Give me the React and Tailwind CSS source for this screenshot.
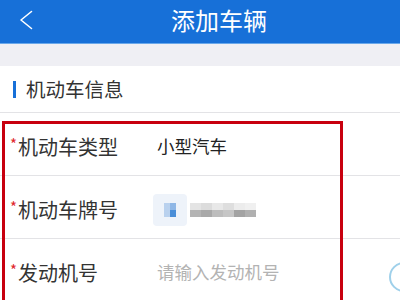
const font = { fontFamily: '"Noto Sans CJK SC", "Noto Sans", sans-serif' };

function Row({ label, children }) {
    return (
        <div className="flex items-center h-[63px] pt-[5px] border-b border-[#e3e3e6]">
            <div className="w-[157px] flex items-center pl-[10px] text-[20px] leading-none text-[#333]">
                <span className="text-[#e0262b] text-[15px] relative -top-[3px] mr-[1px]">*</span>
                {label}
            </div>
            <div className="flex-1 flex items-center">{children}</div>
        </div>
    );
}

export default function App() {
    return (
        <div className="relative w-[400px] h-[300px] overflow-hidden bg-white" style={font}>
            {/* Header */}
            <div className="h-[44px] bg-[#1770d8] border-b border-[#6aa8ea] flex items-center pl-[19px]">
                <svg width="14" height="20" viewBox="0 0 14 20" fill="none" className="-mt-[4px]">
                    <polyline points="12.5,1.5 2,10 12.5,18.5" stroke="white" strokeWidth="1.6" strokeLinecap="round" strokeLinejoin="round" />
                </svg>
                <div className="flex-1 text-center text-white text-[24px] leading-none pl-[5px] -mt-[3px]">添加车辆</div>
            </div>

            <div className="h-[22px] bg-[#efeff4]" />

            {/* Section title */}
            <div className="h-[47px] flex items-center border-b border-[#e3e3e6] pl-[13px]">
                <div className="w-[3px] h-[17px] bg-[#1770d8] mr-[10px]" />
                <span className="text-[19.5px] text-[#333]">机动车信息</span>
            </div>

            <Row label="机动车类型">
                <span className="text-[17.5px] text-[#222]">小型汽车</span>
            </Row>

            <Row label="机动车牌号">
                <div className="flex items-center -ml-[4px]">
                    <div className="w-[34px] h-[32px] rounded-[4px] bg-[#eef3fa] flex items-center justify-center">
                        <div className="grid grid-cols-2">
                            <div className="w-[6px] h-[7px] bg-[#b9d1ee]" />
                            <div className="w-[6px] h-[7px] bg-[#8fb7e6]" />
                            <div className="w-[6px] h-[7px] bg-[#b9d1ee]" />
                            <div className="w-[6px] h-[7px] bg-[#4a8ed8]" />
                        </div>
                    </div>
                    <div className="ml-[3px] flex flex-col">
                        <div className="flex">
                            <div className="w-[11px] h-[7px] bg-[#e4e4e4]" />
                            <div className="w-[11px] h-[7px] bg-[#dcdcdc]" />
                            <div className="w-[11px] h-[7px] bg-[#e8e8e8]" />
                            <div className="w-[11px] h-[7px] bg-[#dedede]" />
                            <div className="w-[11px] h-[7px] bg-[#ececec]" />
                            <div className="w-[11px] h-[7px] bg-[#f0f0f0]" />
                        </div>
                        <div className="flex">
                            <div className="w-[11px] h-[7px] bg-[#b4b4b4]" />
                            <div className="w-[11px] h-[7px] bg-[#a9a9a9]" />
                            <div className="w-[11px] h-[7px] bg-[#bdbdbd]" />
                            <div className="w-[11px] h-[7px] bg-[#c6c6c6]" />
                            <div className="w-[11px] h-[7px] bg-[#a3a3a3]" />
                            <div className="w-[11px] h-[7px] bg-[#b0b0b0]" />
                        </div>
                    </div>
                </div>
            </Row>

            <Row label="发动机号">
                <span className="text-[17.5px] text-[#b3b3b3]">请输入发动机号</span>
            </Row>

            {/* circle at right edge */}
            <div className="absolute left-[389px] top-[262px] w-[30px] h-[30px] rounded-full border-2 border-[#9fd0ea]" />

            {/* red annotation box */}
            <div className="absolute left-[2px] top-[121px] w-[341px] h-[200px] border-[3px] border-[#c8000e]" />
        </div>
    );
}
